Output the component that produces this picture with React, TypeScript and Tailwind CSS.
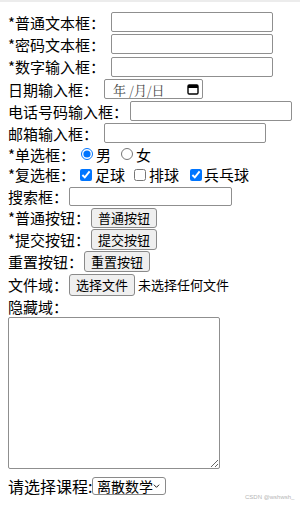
import React from "react";

const font = "font-['Noto_Sans_CJK_SC',sans-serif]";

function TextBox({ w, h = 20 }: { w: number; h?: number }) {
  return (
    <input
      type="text"
      style={{ width: w, height: h }}
      className="border border-[#8f8f8f] rounded-[2px] bg-white shrink-0 outline-none"
    />
  );
}

function Btn({ children, w = 66, h = 21 }: { children: React.ReactNode; w?: number; h?: number }) {
  return (
    <button
      type="button"
      style={{ width: w, height: h }}
      className="border border-[#8a8a8a] rounded-[3px] bg-[#efefef] text-[13px] leading-none text-black flex items-center justify-center shrink-0"
    >
      {children}
    </button>
  );
}

function Row({ label, lw, h, children }: { label: string; lw: number; h: number; children?: React.ReactNode }) {
  return (
    <div className="flex items-center" style={{ height: h }}>
      <span className="shrink-0 whitespace-nowrap text-[15px] leading-none" style={{ width: lw }}>
        {label}
      </span>
      {children}
    </div>
  );
}

export default function App() {
  return (
    <div className={`relative w-[300px] h-[506px] bg-white text-black overflow-hidden ${font}`}>
      <div className="h-[2px] bg-[#ececec]" />
      <div className="px-[8px] pt-[9px]">
        <Row label="*普通文本框：" lw={103} h={22}>
          <TextBox w={162} />
        </Row>
        <Row label="*密码文本框：" lw={103} h={22}>
          <TextBox w={162} />
        </Row>
        <Row label="*数字输入框：" lw={103} h={23}>
          <TextBox w={162} />
        </Row>
        <Row label="日期输入框：" lw={96} h={22}>
          <div className="w-[99px] h-[20px] border border-[#8f8f8f] rounded-[2px] flex items-center pl-[8px] pr-[3px] shrink-0">
            <span className="text-[13px] leading-none text-[#444] font-['Noto_Serif_CJK_SC','Noto_Sans_CJK_SC',serif] whitespace-nowrap">
              年 /月/日
            </span>
            <svg className="ml-auto" width="12" height="12" viewBox="0 0 12 12">
              <rect x="1" y="2" width="10" height="9" rx="1.2" fill="none" stroke="#000" strokeWidth="1.4" />
              <rect x="1" y="2" width="10" height="3" fill="#000" />
            </svg>
          </div>
        </Row>
        <Row label="电话号码输入框：" lw={122} h={22}>
          <TextBox w={162} />
        </Row>
        <Row label="邮箱输入框：" lw={96} h={22}>
          <TextBox w={162} />
        </Row>
        <Row label="*单选框：" lw={73} h={20}>
          <input type="radio" name="sex" defaultChecked className="w-[12px] h-[12px] m-0 accent-[#0075ff] shrink-0" />
          <span className="ml-[3px] text-[15px] leading-none">男</span>
          <input type="radio" name="sex" className="ml-[10px] w-[12px] h-[12px] m-0 accent-[#0075ff] shrink-0" />
          <span className="ml-[3px] text-[15px] leading-none">女</span>
        </Row>
        <Row label="*复选框：" lw={72} h={21}>
          <input type="checkbox" defaultChecked className="w-[12px] h-[12px] m-0 accent-[#0075ff] shrink-0" />
          <span className="ml-[3px] text-[15px] leading-none">足球</span>
          <input type="checkbox" className="ml-[9px] w-[12px] h-[12px] m-0 accent-[#0075ff] shrink-0" />
          <span className="ml-[3px] text-[15px] leading-none">排球</span>
          <input type="checkbox" defaultChecked className="ml-[11px] w-[12px] h-[12px] m-0 accent-[#0075ff] shrink-0" />
          <span className="ml-[2px] text-[15px] leading-none">兵乓球</span>
        </Row>
        <Row label="搜索框：" lw={61} h={22}>
          <TextBox w={163} h={19} />
        </Row>
        <Row label="*普通按钮：" lw={83} h={21}>
          <Btn h={20}>普通按钮</Btn>
        </Row>
        <Row label="*提交按钮：" lw={83} h={22}>
          <Btn>提交按钮</Btn>
        </Row>
        <Row label="重置按钮：" lw={76} h={23}>
          <Btn>重置按钮</Btn>
        </Row>
        <Row label="文件域：" lw={61} h={23}>
          <Btn w={66} h={22}>选择文件</Btn>
          <span className="ml-[3px] text-[13px] leading-none whitespace-nowrap">未选择任何文件</span>
        </Row>
        <Row label="隐藏域：" lw={80} h={20} />
        <textarea className="block mt-[1px] w-[212px] h-[152px] border border-[#8f8f8f] rounded-[2px] bg-white outline-none" />
        <div className="flex items-center h-[21px] mt-[6px]">
          <span className="w-[84px] shrink-0 text-[16px] leading-none whitespace-nowrap">请选择课程:</span>
          <div className="w-[74px] h-[18px] border border-[#8a8a8a] rounded-[3px] bg-white flex items-center pl-[4px] pr-[5px] shrink-0">
            <span className="text-[14px] leading-none whitespace-nowrap">离散数学</span>
            <svg className="ml-auto" width="8" height="6" viewBox="0 0 8 6">
              <path d="M1 1.5 L4 4.5 L7 1.5" fill="none" stroke="#000" strokeWidth="1" />
            </svg>
          </div>
        </div>
      </div>
      <span className="absolute left-[245px] top-[494px] text-[6px] leading-none text-[#b5b5b5] font-['Liberation_Sans',sans-serif] whitespace-nowrap">
        CSDN @wshwsh_
      </span>
    </div>
  );
}
